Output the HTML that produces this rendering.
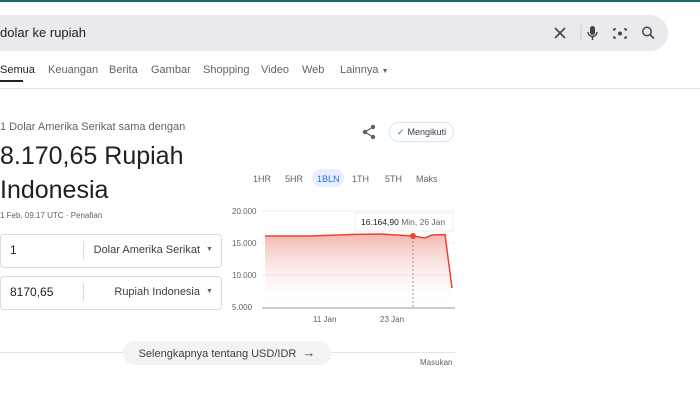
<!DOCTYPE html><html><head><style>
body{margin:0;width:700px;height:400px;background:#fff;font-family:"Liberation Sans",Arial,sans-serif;position:relative;overflow:hidden;color:#202124}
.a{position:absolute;white-space:nowrap}
.n{position:absolute;top:64px;font-size:11px;color:#5f6368}
.t{position:absolute;top:174px;font-size:9px;color:#5f6368}
</style></head><body>
<div class="a" style="left:0;top:0;width:700px;height:2px;background:#1a6b66"></div>
<div class="a" style="left:-20px;top:15px;width:688px;height:36px;background:#e9eaed;border-radius:18px"></div>
<div class="a" style="left:0;top:25px;font-size:13px">dolar ke rupiah</div>
<svg class="a" style="left:552px;top:25px" width="110" height="16" viewBox="0 0 110 16">
<path d="M3 3L13 13M13 3L3 13" stroke="#444" stroke-width="1.6"/>
<line x1="29" y1="0" x2="29" y2="16" stroke="#ccc"/>
<rect x="38" y="1" width="5" height="9" rx="2.5" fill="#444"/><path d="M36 7a4.5 4.5 0 0 0 9 0M40.5 11v4" stroke="#444" stroke-width="1.4" fill="none"/>
<path d="M64 4h-2v2M72 4h2v2M64 13h-2v-2M72 13h2v-2" stroke="#444" stroke-width="1.4" fill="none"/><circle cx="68" cy="8.5" r="2" fill="#444"/>
<circle cx="95" cy="6.5" r="4.2" stroke="#444" stroke-width="1.5" fill="none"/><path d="M98 9.5l4 4" stroke="#444" stroke-width="1.6"/>
</svg>
<div class="n" style="left:0;color:#202124">Semua</div>
<div class="n" style="left:48px">Keuangan</div>
<div class="n" style="left:109px">Berita</div>
<div class="n" style="left:151px">Gambar</div>
<div class="n" style="left:203px">Shopping</div>
<div class="n" style="left:261px">Video</div>
<div class="n" style="left:302px">Web</div>
<div class="n" style="left:340px">Lainnya <span style="font-size:7px">▼</span></div>
<div class="a" style="left:0;top:80px;width:23px;height:2px;background:#202124"></div>
<div class="a" style="left:0;top:88px;width:700px;height:1px;background:#e4e4e4"></div>
<div class="a" style="left:0;top:121px;font-size:11px;color:#5f6368">1 Dolar Amerika Serikat sama dengan</div>
<div class="a" style="left:0;top:139px;font-size:25px;line-height:34px">8.170,65 Rupiah<br>Indonesia</div>
<div class="a" style="left:0;top:211px;font-size:8px;color:#5f6368">1 Feb, 09.17 UTC · Penafian</div>
<div class="a" style="left:0;top:234px;width:220px;height:32px;border:1px solid #dadce0;border-radius:4px"></div>
<div class="a" style="left:10px;top:243px;font-size:12px">1</div>
<div class="a" style="left:83px;top:241px;width:1px;height:18px;background:#dadce0"></div>
<div class="a" style="right:500px;top:244px;font-size:11px;color:#3c4043">Dolar Amerika Serikat</div>
<div class="a" style="left:206px;top:246px;font-size:7px;color:#5f6368">▼</div>
<div class="a" style="left:0;top:276px;width:220px;height:32px;border:1px solid #dadce0;border-radius:4px"></div>
<div class="a" style="left:10px;top:285px;font-size:12px">8170,65</div>
<div class="a" style="left:83px;top:283px;width:1px;height:18px;background:#dadce0"></div>
<div class="a" style="right:500px;top:286px;font-size:11px;color:#3c4043">Rupiah Indonesia</div>
<div class="a" style="left:206px;top:288px;font-size:7px;color:#5f6368">▼</div>
<svg class="a" style="left:361px;top:124px" width="16" height="16" viewBox="0 0 16 16"><circle cx="12" cy="3" r="2.2" fill="#5f6368"/><circle cx="4" cy="8" r="2.2" fill="#5f6368"/><circle cx="12" cy="13" r="2.2" fill="#5f6368"/><path d="M12 3L4 8L12 13" stroke="#5f6368" stroke-width="1.3" fill="none"/></svg>
<div class="a" style="left:389px;top:122px;width:63px;height:18px;border:1px solid #d2e3fc;border-radius:10px;font-size:9px;line-height:18px;color:#3c4043"><span style="color:#1a73e8;margin:0 3px 0 7px">✓</span>Mengikuti</div>
<div class="t" style="left:253px">1HR</div>
<div class="t" style="left:285px">5HR</div>
<div class="a" style="left:312px;top:169px;width:32px;height:18px;border-radius:9px;background:#e8f0fe"></div>
<div class="t" style="left:317px;color:#1a73e8">1BLN</div>
<div class="t" style="left:352px">1TH</div>
<div class="t" style="left:385px">5TH</div>
<div class="t" style="left:416px">Maks</div>
<svg class="a" style="left:225px;top:200px" width="235" height="130" viewBox="225 200 235 130">
<defs><linearGradient id="g" x1="0" y1="0" x2="0" y2="1"><stop offset="0" stop-color="#f4b6b0"/><stop offset="1" stop-color="#fff" stop-opacity="0"/></linearGradient></defs>
<g font-size="8" fill="#5f6368" font-family="Liberation Sans"><text x="232" y="214">20.000</text><text x="232" y="246">15.000</text><text x="232" y="278">10.000</text><text x="232" y="310">5.000</text><text x="313" y="322">11 Jan</text><text x="380" y="322">23 Jan</text></g>
<g stroke="#eee"><line x1="262" y1="211" x2="455" y2="211"/><line x1="262" y1="243" x2="455" y2="243"/><line x1="262" y1="275" x2="455" y2="275"/></g>
<line x1="262" y1="308" x2="455" y2="308" stroke="#999"/>
<path d="M265 236L310 236L350 234.5L380 234L413 236L425 238L432 235L445 234.5L452 288L452 308L265 308Z" fill="url(#g)"/>
<path d="M265 236L310 236L350 234.5L380 234L413 236L425 238L432 235L445 234.5L452 288" stroke="#ea4335" stroke-width="1.5" fill="none"/>
<line x1="413" y1="213" x2="413" y2="308" stroke="#999" stroke-dasharray="2 2"/>
<rect x="355" y="213" width="98" height="18" fill="#fff" stroke="#eee"/>
<text x="361" y="225" font-size="8.5" fill="#202124" font-family="Liberation Sans">16.164,90 <tspan fill="#5f6368">Min, 26 Jan</tspan></text>
<circle cx="413" cy="236" r="3" fill="#ea4335"/>
</svg>
<div class="a" style="left:0;top:352px;width:455px;height:1px;background:#e4e4e4"></div>
<div class="a" style="left:123px;top:341px;width:208px;height:24px;border-radius:12px;background:#f1f3f4;font-size:11px;line-height:24px;text-align:center;color:#3c4043">Selengkapnya tentang USD/IDR <span style="font-size:13px;margin-left:3px">→</span></div>
<div class="a" style="left:420px;top:358px;font-size:8px;color:#5f6368">Masukan</div>
</body></html>
